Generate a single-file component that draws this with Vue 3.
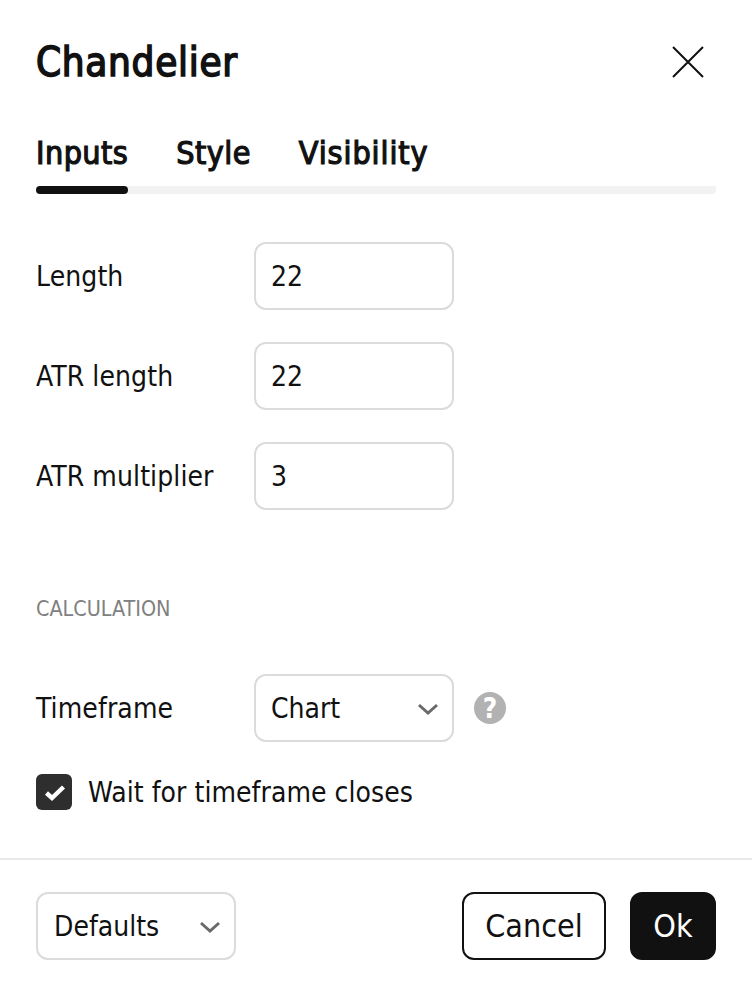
<script setup>
const inputs = [
  { label: 'Length', value: '22' },
  { label: 'ATR length', value: '22' },
  { label: 'ATR multiplier', value: '3' }
];
const tabs = ['Inputs', 'Style', 'Visibility'];
</script>

<template>
  <div class="dialog">
    <div class="head">
      <h1 class="title">Chandelier</h1>
      <button class="close" aria-label="Close">
        <svg width="36" height="36" viewBox="0 0 36 36"><path d="M3 3 L33 33 M33 3 L3 33" stroke="#111" stroke-width="2" fill="none" /></svg>
      </button>
    </div>

    <div class="tabs">
      <span v-for="(t, i) in tabs" :key="t" class="tab" :class="{ active: i === 0 }">{{ t }}</span>
    </div>

    <div class="body">
      <div v-for="row in inputs" :key="row.label" class="row">
        <label class="label">{{ row.label }}</label>
        <div class="field">{{ row.value }}</div>
      </div>

      <div class="section">CALCULATION</div>

      <div class="row">
        <label class="label">Timeframe</label>
        <div class="field select">
          Chart
          <svg class="chev" width="24" height="14" viewBox="0 0 24 14"><path d="M3 3 L12 11 L21 3" stroke="#6a6a6a" stroke-width="3" fill="none" /></svg>
        </div>
        <span class="help">?</span>
      </div>

      <div class="check">
        <span class="box">
          <svg width="24" height="20" viewBox="0 0 24 20"><path d="M4.5 11 L10 16 L21.5 5" stroke="#fff" stroke-width="4.4" fill="none" /></svg>
        </span>
        <span class="check-text">Wait for timeframe closes</span>
      </div>
    </div>

    <div class="foot">
      <div class="field select defaults">
        Defaults
        <svg class="chev" width="24" height="14" viewBox="0 0 24 14"><path d="M3 3 L12 11 L21 3" stroke="#6a6a6a" stroke-width="3" fill="none" /></svg>
      </div>
      <div class="btns">
        <button class="btn cancel">Cancel</button>
        <button class="btn ok">Ok</button>
      </div>
    </div>
  </div>
</template>

<style scoped>
.dialog {
  width: 752px;
  height: 988px;
  background: #fff;
  color: #111;
  font-family: "DejaVu Sans Condensed", "DejaVu Sans", sans-serif;
  font-size: 28px;
  box-sizing: border-box;
}
.head {
  display: flex;
  justify-content: space-between;
  align-items: center;
  padding: 38px 46px 0 36px;
  height: 48px;
}
.title {
  margin: 0;
  font-size: 40px;
  font-weight: 400;
  line-height: 48px;
  -webkit-text-stroke: 1.5px #111;
  letter-spacing: 0.7px;
}
.close {
  border: 0;
  background: none;
  padding: 0;
  display: flex;
}
.tabs {
  display: flex;
  gap: 48px;
  margin: 44px 36px 0;
  padding-bottom: 16px;
  border-bottom: 8px solid #f2f2f2;
  border-radius: 4px;
  height: 40px;
  box-sizing: content-box;
}
.tab {
  font-size: 32px;
  font-weight: 400;
  line-height: 46px;
  -webkit-text-stroke: 1.2px #111;
  letter-spacing: 0.45px;
  position: relative;
  height: 40px;
}
.tab:nth-child(3) {
  letter-spacing: 0.9px;
}
.tab.active::after {
  content: '';
  position: absolute;
  left: 0;
  right: 0;
  bottom: -24px;
  height: 8px;
  background: #111;
  border-radius: 4px;
}
.body {
  padding: 48px 36px 0;
}
.row {
  display: flex;
  align-items: center;
  margin-bottom: 32px;
}
.label {
  width: 218px;
  letter-spacing: 0.1px;
}
.field {
  width: 200px;
  height: 68px;
  box-sizing: border-box;
  border: 2px solid #dbdbdb;
  border-radius: 12px;
  padding: 0 15px;
  display: flex;
  align-items: center;
  background: #fff;
}
.select {
  justify-content: space-between;
  padding-right: 12px;
}
.defaults {
  padding-left: 16px;
}
.chev {
  margin-top: 2px;
}
.section {
  margin-top: 85px;
  margin-bottom: 51px;
  font-size: 21.4px;
  line-height: 28px;
  color: #808080;
}
.help {
  width: 32px;
  height: 32px;
  margin-left: 20px;
  border-radius: 50%;
  background: #b2b2b2;
  color: #fff;
  font-weight: 700;
  font-size: 28px;
  display: flex;
  align-items: center;
  justify-content: center;
}
.check {
  display: flex;
  align-items: center;
  gap: 16px;
  height: 36px;
}
.check-text {
  letter-spacing: 0.05px;
}
.box {
  width: 36px;
  height: 36px;
  border-radius: 6px;
  background: #2e2e2e;
  display: flex;
  align-items: center;
  justify-content: center;
}
.foot {
  margin-top: 48px;
  border-top: 2px solid #e8e8e8;
  padding: 32px 36px 0;
  display: flex;
  justify-content: space-between;
}
.btns {
  display: flex;
  gap: 24px;
}
.btn {
  height: 68px;
  border-radius: 12px;
  font: inherit;
  font-size: 32px;
  padding: 0;
}
.cancel {
  width: 144px;
  background: #fff;
  border: 2px solid #111;
  color: #111;
}
.ok {
  width: 86px;
  background: #111;
  border: 2px solid #111;
  color: #fff;
}
</style>

<style>
body { background: #fff; }
</style>
